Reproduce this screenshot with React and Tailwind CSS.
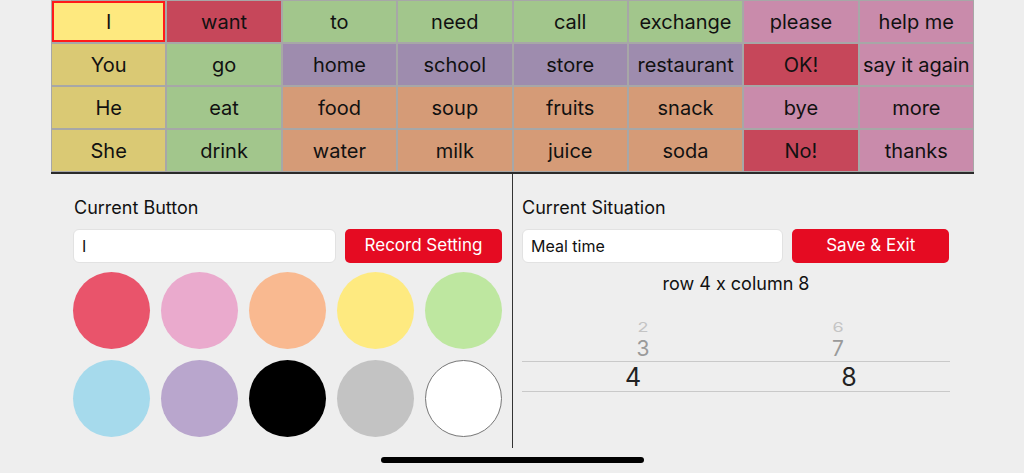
import React from "react";

const C = {
  Y1: "bg-[#fee97f]",
  Y: "bg-[#dac974]",
  R: "bg-[#c6475a]",
  G: "bg-[#a2c68c]",
  P: "bg-[#9e8cae]",
  O: "bg-[#d59b77]",
  K: "bg-[#c98bab]",
};

const rows = [
  [["I", "Y1"], ["want", "R"], ["to", "G"], ["need", "G"], ["call", "G"], ["exchange", "G"], ["please", "K"], ["help me", "K"]],
  [["You", "Y"], ["go", "G"], ["home", "P"], ["school", "P"], ["store", "P"], ["restaurant", "P"], ["OK!", "R"], ["say it again", "K"]],
  [["He", "Y"], ["eat", "G"], ["food", "O"], ["soup", "O"], ["fruits", "O"], ["snack", "O"], ["bye", "K"], ["more", "K"]],
  [["She", "Y"], ["drink", "G"], ["water", "O"], ["milk", "O"], ["juice", "O"], ["soda", "O"], ["No!", "R"], ["thanks", "K"]],
];

const circles = [
  "bg-[#e9546b]",
  "bg-[#eaaacd]",
  "bg-[#f9b990]",
  "bg-[#feea80]",
  "bg-[#bee7a0]",
  "bg-[#a6daec]",
  "bg-[#b9a6cd]",
  "bg-[#000000]",
  "bg-[#c3c3c3]",
  "bg-[#ffffff] border border-[#777777]",
];

export default function App() {
  return (
    <div
      className="w-[1024px] h-[473px] bg-[#eeeeee] overflow-hidden text-[#111111]"
      style={{ fontFamily: "Inter, 'Noto Sans', sans-serif" }}
    >
      <div className="ml-[51px] w-[923px] border-b-2 border-[#2a2a2a]">
        <div className="grid grid-cols-8 bg-[#a7a7a7] gap-[2px] p-[1px] pb-[1px]">
          {rows.flat().map(([t, c], i) => (
            <div
              key={i}
              className={`${C[c]} h-[41px] flex items-center justify-center text-[20px] leading-none whitespace-nowrap ${
                i === 0 ? "border-2 border-[#ff1a1a]" : ""
              }`}
            >
              {t}
            </div>
          ))}
        </div>
      </div>

      <div className="flex h-[274px]">
        <div className="ml-[51px] w-[462px] border-r-[1.5px] border-[#333333] pl-[22px] pr-[10px] pt-[24px]">
          <div className="text-[18px] leading-[20px] pl-[1px]">Current Button</div>
          <div className="flex gap-[9px] mt-[11px]">
            <div className="w-[263px] h-[34px] bg-white rounded-[6px] border border-[#e2e2e2] flex items-center pl-[8px] text-[16px]">
              I
            </div>
            <div className="w-[157px] h-[34px] bg-[#e50b22] rounded-[5px] flex items-center justify-center text-white text-[17px]">
              Record Setting
            </div>
          </div>
          <div className="grid grid-cols-5 gap-x-[11px] gap-y-[11px] mt-[9px] w-[429px]">
            {circles.map((c, i) => (
              <div key={i} className={`w-[77px] h-[77px] rounded-full ${c}`} />
            ))}
          </div>
        </div>

        <div className="pl-[9px] pt-[24px] w-[436px]">
          <div className="text-[18px] leading-[20px]">Current Situation</div>
          <div className="flex gap-[9px] mt-[11px]">
            <div className="w-[262px] h-[34px] bg-white rounded-[6px] border border-[#e2e2e2] flex items-center pl-[8px] text-[16px]">
              Meal time
            </div>
            <div className="w-[157px] h-[34px] bg-[#e50b22] rounded-[5px] flex items-center justify-center text-white text-[17px]">
              Save &amp; Exit
            </div>
          </div>
          <div className="w-[428px] text-center text-[18px] leading-[20px] mt-[11px]">
            row 4 x column 8
          </div>
          <div className="w-[428px] mt-[25px]">
            <div className="flex h-[42px]">
              <div className="w-1/2 flex flex-col items-center pl-[28px]">
                <div className="text-[18px] leading-[16px] text-[#c4c4c4] scale-y-75">2</div>
                <div className="text-[21px] leading-[24px] text-[#9a9a9a] mt-[2px]">3</div>
              </div>
              <div className="w-1/2 flex flex-col items-center pr-[10px]">
                <div className="text-[18px] leading-[16px] text-[#c4c4c4] scale-y-75">6</div>
                <div className="text-[21px] leading-[24px] text-[#9a9a9a] mt-[2px]">7</div>
              </div>
            </div>
            <div className="flex h-[31px] border-y border-[#c9c9c9]">
              <div className="w-1/2 flex items-center justify-center pl-[8px] pt-[3px] text-[25px] text-[#222222]">4</div>
              <div className="w-1/2 flex items-center justify-center pl-[12px] pt-[3px] text-[25px] text-[#222222]">8</div>
            </div>
          </div>
        </div>
      </div>

      <div className="mt-[9px] mx-auto w-[263px] h-[6px] rounded-full bg-black" />
    </div>
  );
}
